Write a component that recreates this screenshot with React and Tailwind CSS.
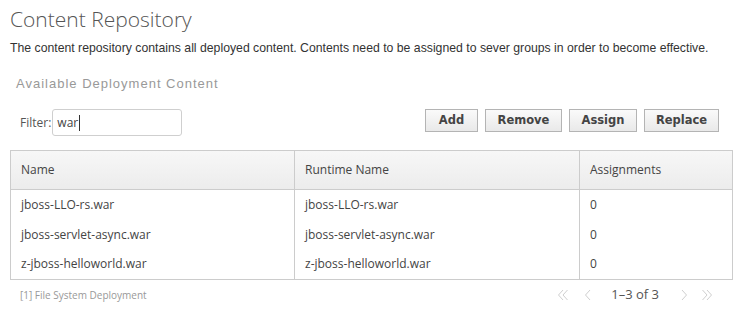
const rows = [
  { name: 'jboss-LLO-rs.war', runtime: 'jboss-LLO-rs.war', assignments: 0 },
  { name: 'jboss-servlet-async.war', runtime: 'jboss-servlet-async.war', assignments: 0 },
  { name: 'z-jboss-helloworld.war', runtime: 'z-jboss-helloworld.war', assignments: 0 },
];

const buttons = [
  { label: 'Add', w: 'w-[53px]' },
  { label: 'Remove', w: 'w-[77px]' },
  { label: 'Assign', w: 'w-[68px]' },
  { label: 'Replace', w: 'w-[75px]' },
];

function Chevron({ double, right }) {
  return (
    <svg width="12" height="12" viewBox="0 0 12 12" fill="none" stroke="#cfcfcf" strokeWidth="1">
      <g transform={right ? 'translate(12,0) scale(-1,1)' : undefined}>
        <path d={double ? 'M6 1 L1.5 6 L6 11' : 'M7 1 L2.5 6 L7 11'} />
        {double && <path d="M10.5 1 L6 6 L10.5 11" />}
      </g>
    </svg>
  );
}

export default function App() {
  return (
    <div className="w-[748px] h-[320px] bg-white overflow-hidden px-[10px] pt-[5px] text-[#333]">
      <h1 className="text-[21px] leading-[28px] font-light text-[#555] font-['Open_Sans',sans-serif]">
        Content Repository
      </h1>
      <p className="mt-[7px] text-[12.25px] leading-[16px] font-['Liberation_Sans',Arial,sans-serif] text-[#333]">
        The content repository contains all deployed content. Contents need to be assigned to sever groups in order to become effective.
      </p>
      <h2 className="mt-[20px] ml-[6px] text-[13px] leading-[16px] tracking-[1px] text-[#999] font-['Liberation_Sans',Arial,sans-serif]">
        Available Deployment Content
      </h2>

      <div className="mt-[17px] flex items-start justify-between h-[27px]">
        <div className="flex items-center h-[27px] ml-[10px] font-['Open_Sans',sans-serif] text-[12px] text-[#555]">
          <span>Filter:</span>
          <div className="ml-[1px] w-[130px] h-[27px] border border-[#cfcfcf] rounded-[3px] px-[4px] flex items-center text-[#444]">
            war<span className="ml-[1px] w-px h-[16px] bg-[#333]" />
          </div>
        </div>
        <div className="flex gap-[7px] mr-[19px]">
          {buttons.map((b) => (
            <button
              key={b.label}
              className={`${b.w} h-[23px] border border-[#b4b4b4] bg-gradient-to-b from-[#fafafa] to-[#e9e9e9] text-[11.5px] font-bold text-[#444] font-['DejaVu_Sans',sans-serif]`}
            >
              {b.label}
            </button>
          ))}
        </div>
      </div>

      <table className="mt-[14px] w-[723px] border-collapse border border-[#cccccc] font-['Open_Sans',sans-serif] text-[12px] text-[#444]">
        <thead>
          <tr className="h-[39px] bg-gradient-to-b from-[#f7f7f7] to-[#ececec] border-b border-[#cccccc]">
            <th className="w-[284px] text-left font-normal pl-[10px] border-r border-[#cccccc]">Name</th>
            <th className="w-[285px] text-left font-normal pl-[10px] border-r border-[#cccccc]">Runtime Name</th>
            <th className="text-left font-normal pl-[10px]">Assignments</th>
          </tr>
        </thead>
        <tbody>
          {rows.map((r) => (
            <tr key={r.name} className="h-[30px]">
              <td className="pl-[10px] border-r border-[#cccccc]">{r.name}</td>
              <td className="pl-[10px] border-r border-[#cccccc]">{r.runtime}</td>
              <td className="pl-[10px]">{r.assignments}</td>
            </tr>
          ))}
        </tbody>
      </table>

      <div className="mt-[8px] flex items-center justify-between h-[14px]">
        <span className="ml-[10px] text-[10px] text-[#999] font-['Open_Sans',sans-serif]">[1] File System Deployment</span>
        <div className="flex items-center mr-[25px] text-[13px] text-[#555] font-['Open_Sans',sans-serif]">
          <Chevron double />
          <span className="ml-[14px]"><Chevron /></span>
          <span className="ml-[16px] mr-[18px]">1–3 of 3</span>
          <Chevron right />
          <span className="ml-[12px]"><Chevron double right /></span>
        </div>
      </div>
    </div>
  );
}
